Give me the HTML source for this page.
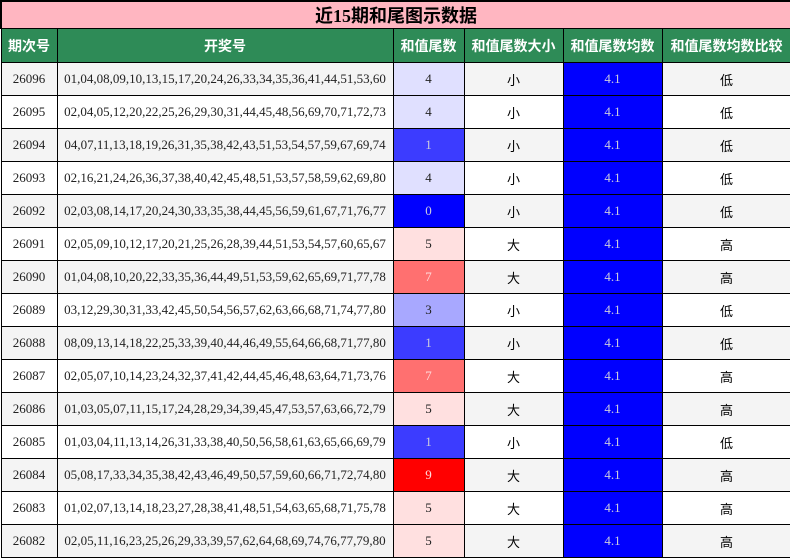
<!DOCTYPE html>
<html><head><meta charset="utf-8"><style>
body{margin:0;width:790px;height:558px;overflow:hidden;background:#fff;font-family:"Liberation Serif","Noto Sans CJK SC",serif;}
table{border-collapse:collapse;table-layout:fixed;width:790px;}
td,th{border:1px solid #000;text-align:center;padding:0;font-size:13px;color:#222;}
.t td{background:#ffb6c1;height:23px;font-size:18px;font-weight:bold;color:#000;border-width:2px 2px 1px 2px;font-family:"Liberation Serif","Noto Sans CJK SC",serif;}
th{background:#2e8b57;color:#fff;height:33px;font-size:14px;font-family:"Liberation Sans","Noto Sans CJK SC",sans-serif;}
tr.r td{height:32px;}
tr.r:nth-child(odd) td{background:#f4f4f4}
tr.r:nth-child(even) td{background:#fff}
tr.r td.av{background:#0000ff;color:#ccd;}
.cj{font-family:"Noto Sans CJK SC",sans-serif;color:#000}
</style></head><body>
<table>
<colgroup><col style="width:56px"><col style="width:336px"><col style="width:71px"><col style="width:99px"><col style="width:99px"><col style="width:129px"></colgroup>
<tr class="t"><td colspan="6">近15期和尾图示数据</td></tr>
<tr><th>期次号</th><th>开奖号</th><th>和值尾数</th><th>和值尾数大小</th><th>和值尾数均数</th><th>和值尾数均数比较</th></tr>
<tbody>
<tr class="r"><td>26096</td><td>01,04,08,09,10,13,15,17,20,24,26,33,34,35,36,41,44,51,53,60</td><td style="background:#e0e0ff">4</td><td class="cj">小</td><td class="av">4.1</td><td class="cj">低</td></tr>
<tr class="r"><td>26095</td><td>02,04,05,12,20,22,25,26,29,30,31,44,45,48,56,69,70,71,72,73</td><td style="background:#e0e0ff">4</td><td class="cj">小</td><td class="av">4.1</td><td class="cj">低</td></tr>
<tr class="r"><td>26094</td><td>04,07,11,13,18,19,26,31,35,38,42,43,51,53,54,57,59,67,69,74</td><td style="background:#3c3cff;color:#ccd">1</td><td class="cj">小</td><td class="av">4.1</td><td class="cj">低</td></tr>
<tr class="r"><td>26093</td><td>02,16,21,24,26,36,37,38,40,42,45,48,51,53,57,58,59,62,69,80</td><td style="background:#e0e0ff">4</td><td class="cj">小</td><td class="av">4.1</td><td class="cj">低</td></tr>
<tr class="r"><td>26092</td><td>02,03,08,14,17,20,24,30,33,35,38,44,45,56,59,61,67,71,76,77</td><td style="background:#0000ff;color:#ccd">0</td><td class="cj">小</td><td class="av">4.1</td><td class="cj">低</td></tr>
<tr class="r"><td>26091</td><td>02,05,09,10,12,17,20,21,25,26,28,39,44,51,53,54,57,60,65,67</td><td style="background:#ffe0e0">5</td><td class="cj">大</td><td class="av">4.1</td><td class="cj">高</td></tr>
<tr class="r"><td>26090</td><td>01,04,08,10,20,22,33,35,36,44,49,51,53,59,62,65,69,71,77,78</td><td style="background:#ff7070;color:#fdd">7</td><td class="cj">大</td><td class="av">4.1</td><td class="cj">高</td></tr>
<tr class="r"><td>26089</td><td>03,12,29,30,31,33,42,45,50,54,56,57,62,63,66,68,71,74,77,80</td><td style="background:#a8a8ff">3</td><td class="cj">小</td><td class="av">4.1</td><td class="cj">低</td></tr>
<tr class="r"><td>26088</td><td>08,09,13,14,18,22,25,33,39,40,44,46,49,55,64,66,68,71,77,80</td><td style="background:#3c3cff;color:#ccd">1</td><td class="cj">小</td><td class="av">4.1</td><td class="cj">低</td></tr>
<tr class="r"><td>26087</td><td>02,05,07,10,14,23,24,32,37,41,42,44,45,46,48,63,64,71,73,76</td><td style="background:#ff7070;color:#fdd">7</td><td class="cj">大</td><td class="av">4.1</td><td class="cj">高</td></tr>
<tr class="r"><td>26086</td><td>01,03,05,07,11,15,17,24,28,29,34,39,45,47,53,57,63,66,72,79</td><td style="background:#ffe0e0">5</td><td class="cj">大</td><td class="av">4.1</td><td class="cj">高</td></tr>
<tr class="r"><td>26085</td><td>01,03,04,11,13,14,26,31,33,38,40,50,56,58,61,63,65,66,69,79</td><td style="background:#3c3cff;color:#ccd">1</td><td class="cj">小</td><td class="av">4.1</td><td class="cj">低</td></tr>
<tr class="r"><td>26084</td><td>05,08,17,33,34,35,38,42,43,46,49,50,57,59,60,66,71,72,74,80</td><td style="background:#ff0000;color:#fdd">9</td><td class="cj">大</td><td class="av">4.1</td><td class="cj">高</td></tr>
<tr class="r"><td>26083</td><td>01,02,07,13,14,18,23,27,28,38,41,48,51,54,63,65,68,71,75,78</td><td style="background:#ffe0e0">5</td><td class="cj">大</td><td class="av">4.1</td><td class="cj">高</td></tr>
<tr class="r"><td>26082</td><td>02,05,11,16,23,25,26,29,33,39,57,62,64,68,69,74,76,77,79,80</td><td style="background:#ffe0e0">5</td><td class="cj">大</td><td class="av">4.1</td><td class="cj">高</td></tr>
</tbody></table>
</body></html>
